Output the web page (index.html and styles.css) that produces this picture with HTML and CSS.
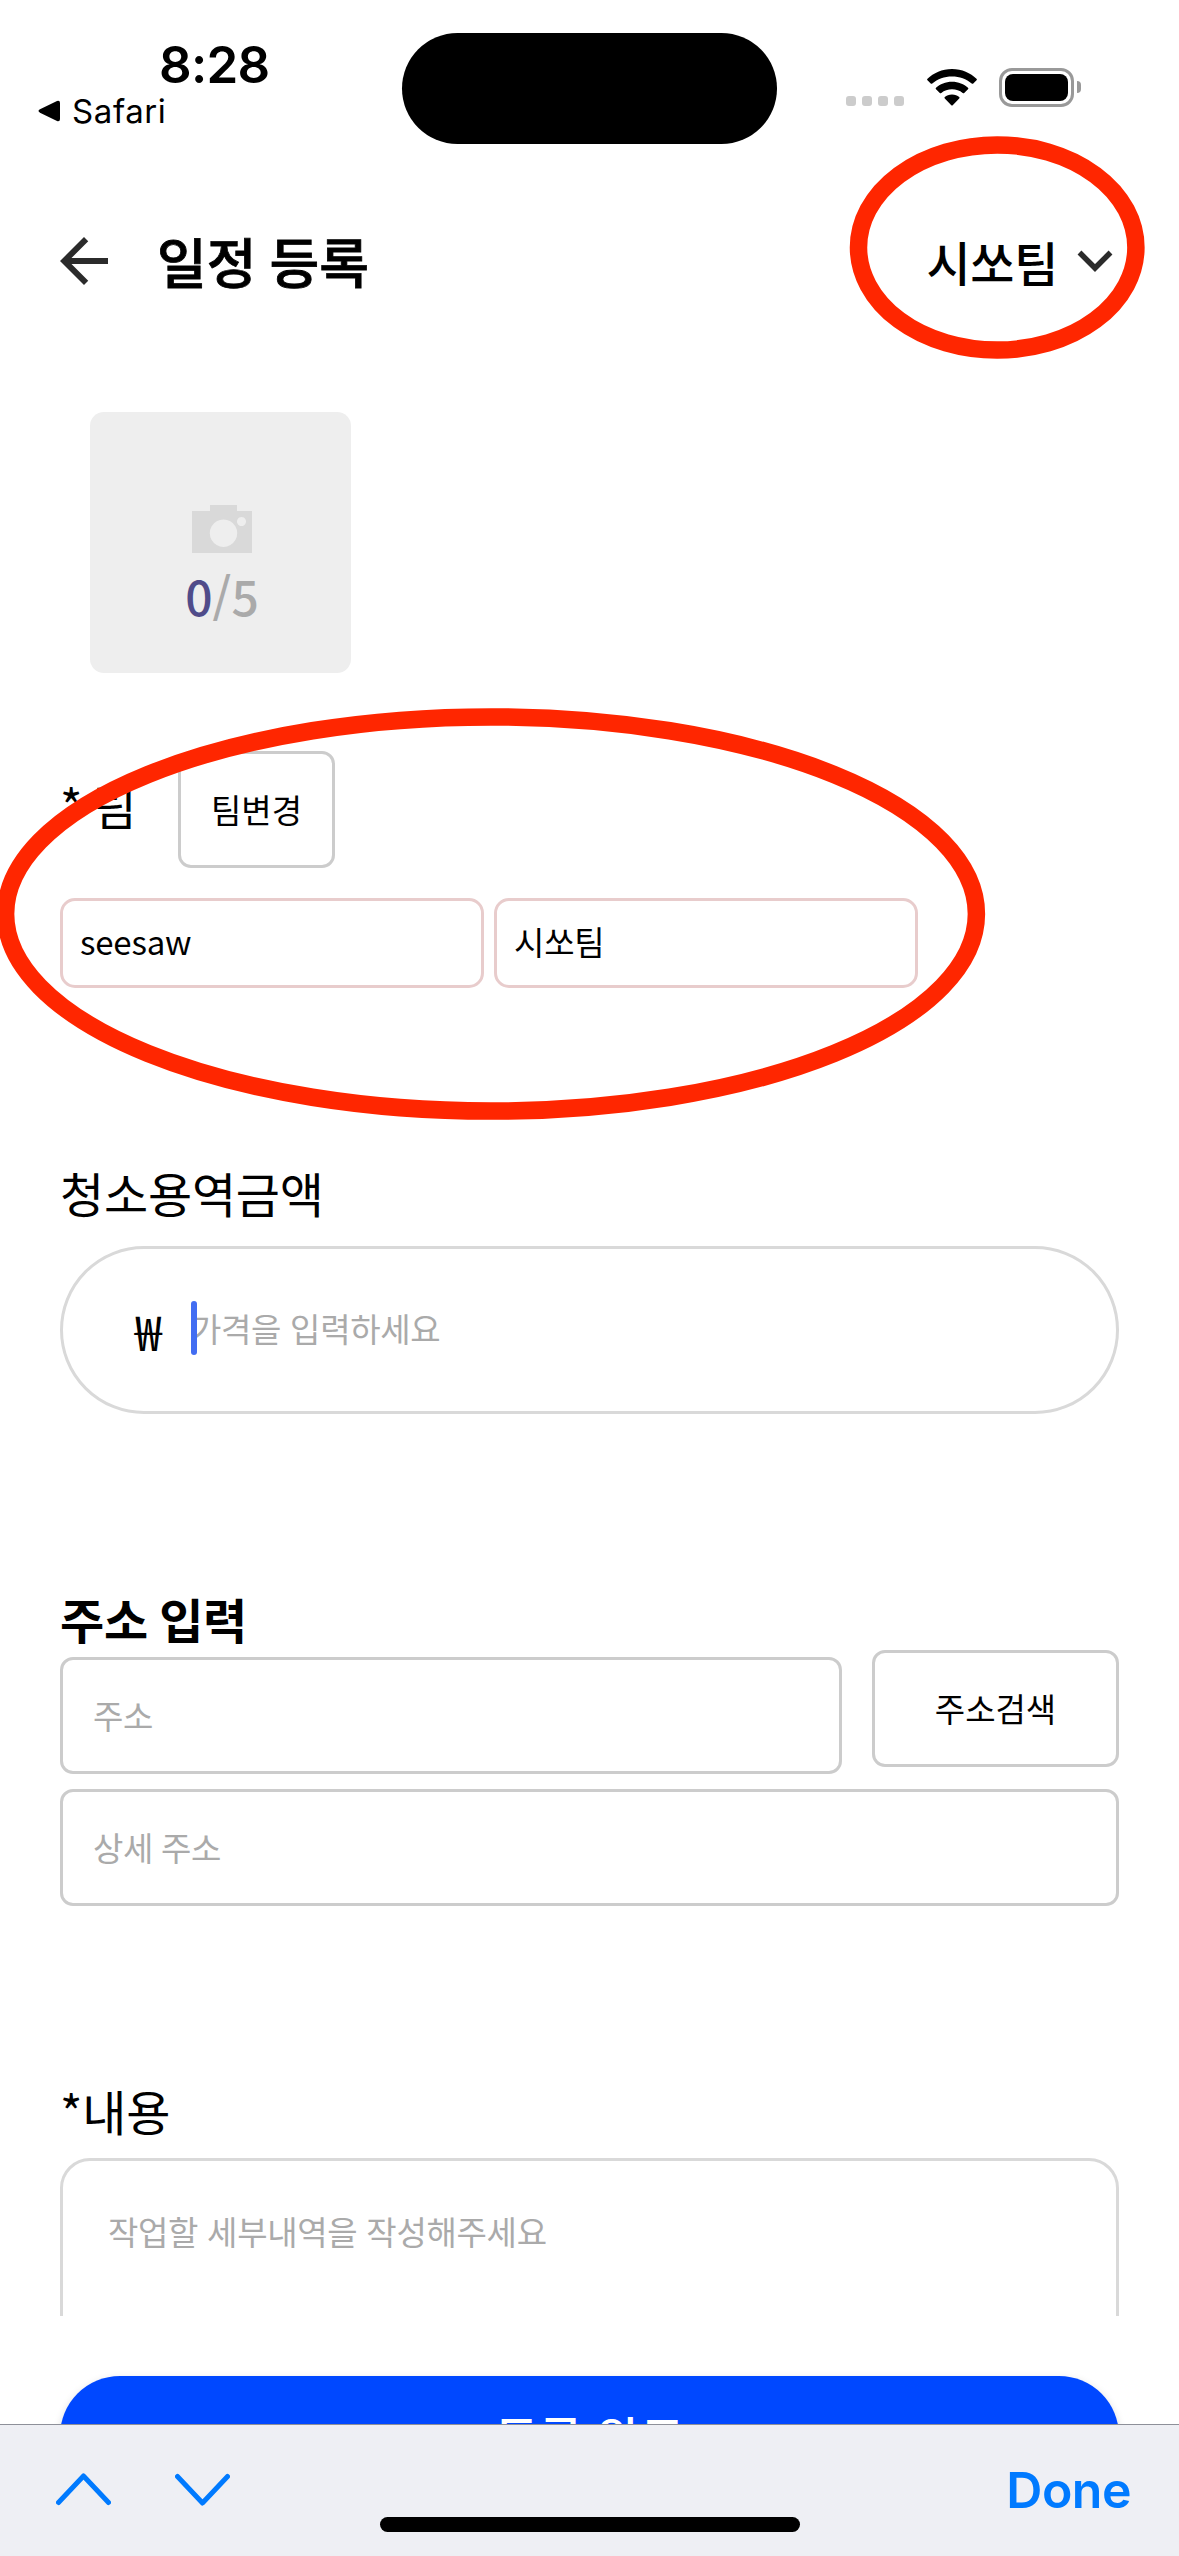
FILE: index.html
```html
<!DOCTYPE html>
<html lang="ko">
<head>
<meta charset="utf-8">
<title>일정 등록</title>
<link rel="stylesheet" href="styles.css">
</head>
<body>
<div class="screen">
  <div class="status">
    <div class="status-left">
      <div class="time">8:28</div>
      <div class="back-app">
        <svg width="22" height="22" viewBox="0 0 22 22"><path d="M2 9.3 19 .9Q22 0 22 3V19Q22 22 19 21.100L2 12.700Q-1 11 2 9.300Z"/></svg>
        <span>Safari</span>
      </div>
    </div>
    <div class="island"></div>
    <div class="status-right">
      <div class="dots"><i></i><i></i><i></i><i></i></div>
      <svg class="wifi" width="50" height="38" viewBox="0 0 50 38">
        <path d="M25 0C35 0 43.500 4 49.500 9.700Q50.300 10.500 49.500 11.300L46.300 14.500Q45.500 15.200 44.700 14.500C39.500 9.900 32.500 7.500 25 7.500S10.500 9.900 5.300 14.500Q4.500 15.200 3.700 14.500L.5 11.300Q-.3 10.500.5 9.700C6.500 4 15 0 25 0Z"/>
        <path d="M25 12.800C31.500 12.800 37 15.200 41 18.700Q41.800 19.500 41 20.300L37.200 24Q36.500 24.700 35.700 24C32.800 21.600 29 20.300 25 20.300S17.200 21.600 14.300 24Q13.500 24.700 12.800 24L9 20.300Q8.200 19.500 9 18.700C13 15.200 18.500 12.800 25 12.800Z"/>
        <path d="M25 25.500C28 25.500 30.500 26.500 32.200 28Q33 28.800 32.200 29.600L25.700 36.200Q25 36.900 24.300 36.200L17.800 29.600Q17 28.800 17.800 28C19.500 26.500 22 25.500 25 25.500Z"/>
      </svg>
      <div class="battery"><div class="level"></div></div>
      <div class="nub"></div>
    </div>
  </div>

  <header class="header">
    <svg class="arrow" width="48" height="48" viewBox="4 4 16 16"><path d="M20 11H7.830l5.590-5.590L12 4l-8 8 8 8 1.410-1.410L7.830 13H20v-2z"/></svg>
    <h1>일정 등록</h1>
    <div class="team-pick">
      <span>시쏘팀</span>
      <svg width="36" height="22" viewBox="0 0 36 22"><path d="M2.500 2.500 18 18 33.500 2.500"/></svg>
    </div>
  </header>

  <main class="form">
    <div class="photo">
      <svg width="60" height="48" viewBox="0 0 60 48"><path fill-rule="evenodd" d="M0 6H18V0H45V6H60V48H0ZM31.500 14.500a13.700 13.700 0 1 0 .01 0ZM49.500 12a4.500 4.500 0 1 0 .01 0Z"/></svg>
      <div class="count"><b>0</b>/5</div>
    </div>

    <div class="team-row">
      <span class="label team-label">* 팀</span>
      <div class="button team-button">팀변경</div>
    </div>
    <div class="team-fields">
      <div class="chip">seesaw</div>
      <div class="chip">시쏘팀</div>
    </div>

    <div class="label price-label">청소용역금액</div>
    <div class="price">
      <span class="won">₩</span>
      <span class="price-input"><i class="caret"></i>가격을 입력하세요</span>
    </div>

    <h2>주소 입력</h2>
    <div class="address-row">
      <div class="input address">주소</div>
      <div class="button search">주소검색</div>
    </div>
    <div class="input detail">상세 주소</div>

    <div class="label content-label">*내용</div>
    <div class="textarea">작업할 세부내역을 작성해주세요</div>
  </main>

  <footer class="footer"><div class="submit">등록 완료</div></footer>

  <div class="keyboard-bar">
    <svg width="55" height="34" viewBox="0 0 55 34"><path d="M2.500 30.500 27.500 4 52.500 30.500"/></svg>
    <svg width="55" height="34" viewBox="0 0 55 34"><path d="M2.500 4.500 27.500 31 52.500 4.500"/></svg>
    <span class="done">Done</span>
    <div class="home"></div>
  </div>

  <svg class="rings" width="1179" height="1200" viewBox="0 0 1179 1200">
    <ellipse cx="997.200" cy="247.500" rx="138.700" ry="102.600"/>
    <ellipse cx="491" cy="914" rx="485.400" ry="197.100"/>
  </svg>
</div>
</body>
</html>
```
FILE: styles.css
```css
* { box-sizing: border-box; }
body { margin: 0; background: #fff; }
h1, h2 { margin: 0; }
svg { display: block; flex: none; }

.screen {
  position: relative;
  width: 1179px;
  height: 2556px;
  overflow: hidden;
  display: flex;
  flex-direction: column;
  background: #fff;
  color: #000;
  font-family: "Noto Sans CJK KR", sans-serif;
}

/* status bar */
.status {
  height: 177px;
  flex: none;
  display: grid;
  grid-template-columns: 402px 375px 1fr;
  font-family: Inter, sans-serif;
}
.status-left { padding: 34px 0 0 38px; }
.time { padding-left: 121px; font-size: 51px; line-height: 62px; font-weight: 600; letter-spacing: -0.7px; }
.back-app {
  display: flex;
  align-items: center;
  gap: 12px;
  margin-top: -5px;
  font-size: 33px;
  line-height: 40px;
  letter-spacing: 0.6px;
}
.island { height: 111px; margin-top: 33px; border-radius: 56px; background: #000; }
.status-right { display: flex; align-items: flex-start; padding: 68px 0 0 69px; }
.dots { display: flex; gap: 6px; margin: 28px 23px 0 0; }
.dots i { width: 10px; height: 10px; border-radius: 3px; background: #ccc; }
.wifi { margin: 1px 22px 0 0; }
.battery { width: 75px; height: 39px; padding: 3px; border: 3px solid #999; border-radius: 13px; }
.level { height: 27px; border-radius: 8px; background: #000; }
.nub { width: 4px; height: 12px; margin: 13px 0 0 3px; border-radius: 0 6px 6px 0; background: #999; }

/* page header */
.header { height: 168px; flex: none; display: flex; align-items: center; padding: 0 66px 0 60px; }
.arrow { fill: #2b2b2b; }
.header h1 {
  margin-left: 49px;
  font-size: 54px;
  line-height: 80px;
  font-weight: 500;
  word-spacing: -2px;
  -webkit-text-stroke: 0.8px #000;
}
.team-pick {
  margin-left: auto;
  display: flex;
  align-items: center;
  gap: 19px;
  font-size: 48px;
  line-height: 70px;
  font-weight: 500;
  letter-spacing: -0.3px;
}
.team-pick path { fill: none; stroke: #2b2b2b; stroke-width: 5.5; }

/* form */
.form { flex: 1; min-height: 0; overflow: hidden; padding: 67px 60px 0; }
.label { font-size: 48px; line-height: 70px; letter-spacing: -0.2px; }
.photo {
  width: 261px;
  height: 261px;
  margin-left: 30px;
  padding: 93px 0 0 3px;
  border-radius: 14px;
  background: #eee;
  display: flex;
  flex-direction: column;
  align-items: center;
}
.photo svg { fill: #d9d9d9; }
.count { margin-top: 7px; font-size: 48px; line-height: 70px; font-weight: 500; color: #aaa; }
.count b { font-weight: 500; color: #504c8a; }

.button, .input {
  height: 117px;
  border: 3px solid #ccc;
  border-radius: 13px;
  font-size: 33px;
  line-height: 111px;
}
.button { text-align: center; }
.input { padding-left: 30px; color: #aaa; letter-spacing: -0.3px; word-spacing: -1px; }

.team-row { display: flex; align-items: center; margin-top: 78px; }
.team-label { width: 77px; margin-bottom: 12px; word-spacing: -3px; white-space: nowrap; }
.team-button { width: 157px; margin-left: 41px; }
.team-fields { display: flex; gap: 10px; margin-top: 30px; }
.chip {
  width: 424px;
  height: 90px;
  padding-left: 17px;
  border: 3px solid #e8cccc;
  border-radius: 15px;
  font-size: 33px;
  line-height: 81px;
  letter-spacing: -0.2px;
}

.price-label { margin-top: 169px; }
.price {
  height: 168px;
  margin-top: 19px;
  padding-left: 72px;
  border: 3px solid #d9d9d9;
  border-radius: 84px;
  display: flex;
  align-items: center;
}
.won { width: 56px; font-size: 48px; line-height: 70px; }
.price-input {
  position: relative;
  margin-bottom: 5px;
  font-size: 33px;
  line-height: 54px;
  letter-spacing: -0.3px;
  color: #aaa;
}
.caret { position: absolute; left: 0; top: 0; width: 6px; height: 54px; border-radius: 3px; background: #426df2; }

h2 { margin-top: 172px; font-size: 48px; line-height: 64px; font-weight: 700; letter-spacing: -0.2px; word-spacing: -2px; }
.address-row { height: 124px; display: flex; justify-content: space-between; }
.address { width: 782px; align-self: flex-end; }
.search { width: 247px; }
.detail { margin-top: 15px; }

.content-label { margin-top: 169px; }
.textarea {
  height: 300px;
  margin-top: 13px;
  padding: 46px 45px;
  border: 3px solid #d9d9d9;
  border-radius: 30px;
  font-size: 33px;
  line-height: 48px;
  letter-spacing: -0.3px;
  color: #aaa;
}

/* submit button, partly covered by the keyboard bar */
.footer { height: 108px; flex: none; overflow: hidden; padding: 60px 60px 0; }
.submit {
  height: 120px;
  border-radius: 60px;
  background: #0048ff;
  box-shadow: 0 3px 9px rgba(0, 0, 0, 0.15);
  color: #fff;
  font-size: 48px;
  line-height: 120px;
  font-weight: 500;
  text-align: center;
}

.keyboard-bar {
  position: relative;
  height: 132px;
  flex: none;
  display: flex;
  align-items: flex-start;
  gap: 64px;
  padding: 47px 48px 0 56px;
  border-top: 1px solid #8e9099;
  background: #eeeff4;
}
.keyboard-bar path { fill: none; stroke: #007aff; stroke-width: 5; stroke-linecap: round; stroke-linejoin: round; }
.done { margin: -13px 0 0 auto; font: 600 50px/62px Inter, sans-serif; letter-spacing: -0.5px; color: #007aff; }
.home { position: absolute; left: 380px; top: 92px; width: 420px; height: 15px; border-radius: 8px; background: #000; }

/* red marker rings drawn over the page */
.rings { position: absolute; left: 0; top: 0; }
.rings ellipse { fill: none; stroke: #ff2600; stroke-width: 17.5; }
```
